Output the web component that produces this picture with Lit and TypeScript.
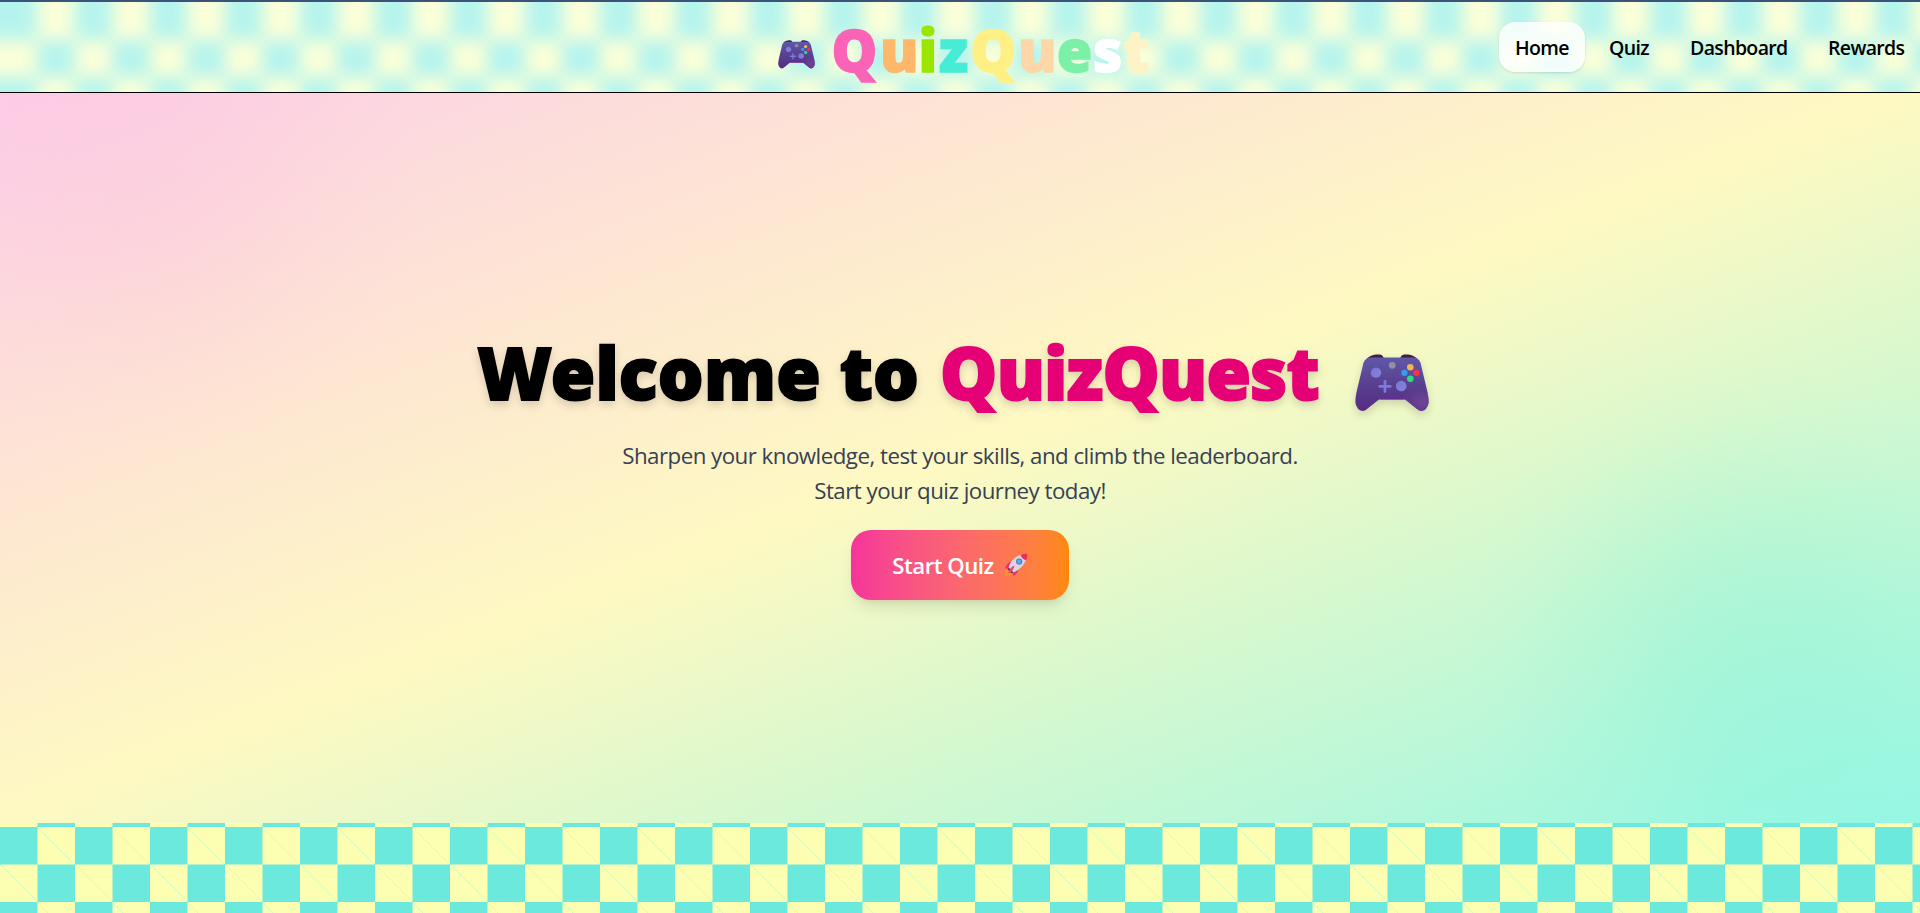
import { LitElement, html, css } from "lit";
import { customElement, property } from "lit/decorators.js";
import { classMap } from "lit/directives/class-map.js";

@customElement("game-pad")
export class GamePad extends LitElement {
  static styles = css`
    :host { display: block; }
    svg { display: block; width: 100%; height: 100%; overflow: visible; }
  `;
  render() {
    return html`<svg viewBox="0 0 74 58" preserveAspectRatio="none">
      <defs>
        <linearGradient id="shell" x1="0" y1="0" x2="0" y2="1">
          <stop offset="0" stop-color="#6058a8"></stop>
          <stop offset=".5" stop-color="#58408f"></stop>
          <stop offset="1" stop-color="#572a84"></stop>
        </linearGradient>
        <radialGradient id="grip" cx=".92" cy=".85" r=".3">
          <stop offset="0" stop-color="#704494"></stop>
          <stop offset="1" stop-color="#704494" stop-opacity="0"></stop>
        </radialGradient>
        <linearGradient id="stick" x1="0" y1="0" x2="1" y2="1">
          <stop offset="0" stop-color="#7a75d6"></stop>
          <stop offset="1" stop-color="#8582dc"></stop>
        </linearGradient>
      </defs>
      <path d="M11 6C13 2 19 0 25 .5Q28 1 29 5L27 7H11ZM63 6C61 2 55 0 49 .5Q46 1 45 5L47 7H63Z" fill="#431c48"></path>
      <path d="M16 3.5H58Q63.500 3.500 65.500 9L72.500 39Q74 47 73.500 50Q72 57 66.500 58Q64 58 62 56L51 47Q49.500 45.800 47 45.800H27Q24.500 45.800 23 47L12 56Q10 58 7.500 58Q2 57 .5 50Q0 47 1.500 39L8.500 9Q10.500 3.500 16 3.500Z" fill="url(#shell)"></path>
      <path d="M16 3.5H58Q63.500 3.500 65.500 9L72.500 39Q74 47 73.500 50Q72 57 66.500 58Q64 58 62 56L51 47Q49.500 45.800 47 45.800H27Q24.500 45.800 23 47L12 56Q10 58 7.500 58Q2 57 .5 50Q0 47 1.500 39L8.500 9Q10.500 3.500 16 3.500Z" fill="url(#grip)"></path>
      <path d="M25 45.800H49" stroke="#6d27a5" stroke-width="1.400"></path>
      <circle cx="21" cy="19" r="5.200" fill="url(#stick)"></circle>
      <circle cx="46.200" cy="32.500" r="5.400" fill="url(#stick)"></circle>
      <path d="M30 27.800V38.200M24.800 33H35.200" stroke="#7d77e2" stroke-width="2.800" stroke-linecap="round"></path>
      <circle cx="37.200" cy="11.500" r="3.400" fill="#978ea6"></circle>
      <circle cx="55.300" cy="13.400" r="3.300" fill="#f5b74d"></circle>
      <circle cx="61.300" cy="19.200" r="3.200" fill="#f7314f"></circle>
      <circle cx="49.400" cy="19.200" r="3.200" fill="#349eed"></circle>
      <circle cx="55.300" cy="25.200" r="3.300" fill="#2ddd83"></circle>
    </svg>`;
  }
}

@customElement("rocket-icon")
export class RocketIcon extends LitElement {
  static styles = css`
    :host { display: block; }
    svg { display: block; width: 100%; height: 100%; }
  `;
  render() {
    return html`<svg viewBox="0 0 24 24">
      <path d="M1.500 16.500Q5 15 7.500 18Q9.500 20.500 6.500 22Q3 23 .8 22.600Z" fill="#ff8f2a"></path>
      <path d="M8 8.500Q3 9 1 15.500L6 15.500ZM14.500 15Q14.500 20.500 9.500 23L8 18Z" fill="#e8336d"></path>
      <path d="M4.500 14.500Q7 5.500 16 2Q20 .8 22.600 1.200Q23 3.500 22 7Q18.500 15.500 9.500 19.500Z" fill="#dcd6e2"></path>
      <path d="M16.500 1.800Q20.500 .2 23.200 .8Q23.800 3.500 22.200 7.400Q17.800 6.300 16.500 1.800Z" fill="#ee2f55"></path>
      <path d="M4.500 14.500L9.500 19.500L7.500 20.300L3.500 16.300Z" fill="#5a3a72"></path>
      <path d="M10.500 12.500Q6 14 4 20Q9.500 19 10.500 12.500Z" fill="#f0407c"></path>
      <circle cx="15.200" cy="8.500" r="3.100" fill="#4b6fb8"></circle>
      <circle cx="15.200" cy="8.500" r="2.200" fill="#5ea6f2"></circle>
    </svg>`;
  }
}

interface Glyph { ch: string; color: string; width: number; }

@customElement("app-root")
export class AppRoot extends LitElement {
  @property() page = "Home";

  private links = [
    { label: "Home", width: 54 },
    { label: "Quiz", width: 41 },
    { label: "Dashboard", width: 98 },
    { label: "Rewards", width: 76 },
  ];

  private letters: Glyph[] = [
    { ch: "Q", color: "#fb64b6", width: 48.4 },
    { ch: "u", color: "#ffb86a", width: 38.5 },
    { ch: "i", color: "#9ae600", width: 20.5 },
    { ch: "z", color: "#46ecd5", width: 31.4 },
    { ch: "Q", color: "#fff085", width: 47.7 },
    { ch: "u", color: "#ffd6a7", width: 38.8 },
    { ch: "e", color: "#7bf1a8", width: 36 },
    { ch: "s", color: "#ffffff", width: 30.1 },
    { ch: "t", color: "#fef3c6", width: 26 },
  ];

  static styles = css`
    :host {
      display: flex;
      flex-direction: column;
      box-sizing: border-box;
      height: 913px;
      overflow: hidden;
      border-top: 2px solid #3b5379;
      font-family: "Open Sans", "Noto Sans", sans-serif;
      color: #000;
      background-color: #6ce9dd;
      background-image:
        linear-gradient(45deg, #fcffb2 25%, transparent 25%, transparent 75%, #fcffb2 75%, #fcffb2),
        linear-gradient(45deg, #fcffb2 25%, transparent 25%, transparent 75%, #fcffb2 75%, #fcffb2);
      background-size: 75px 75px;
      background-position: 0 0, 37.5px 37.5px;
    }
    .header {
      position: relative;
      z-index: 0;
      display: grid;
      grid-template-columns: 1fr auto 1fr;
      height: 90px;
      flex: none;
      overflow: hidden;
    }
    .haze {
      position: absolute;
      z-index: -1;
      inset: -30px;
      display: flex;
      flex-direction: column;
      filter: blur(8.5px);
    }
    .band {
      height: 37.5px;
      flex: none;
      border-left: 30px solid #b5f4ee;
      background: repeating-linear-gradient(90deg, #b5f4ee 0 37.5px, #fbffd8 37.5px 75px);
    }
    .band.odd {
      border-color: #fbffd8;
      background: repeating-linear-gradient(90deg, #fbffd8 0 37.5px, #b5f4ee 37.5px 75px);
    }
    .band.first { height: 67.5px; }
    .band.last { height: auto; flex: 1; }
    .brand { grid-column: 2; display: flex; padding-left: 7px; }
    .brand game-pad { width: 37px; height: 28.5px; margin: 38px 16.4px 0 0; }
    .word {
      display: flex;
      padding-top: 17.5px;
      font-family: "Noto Sans", sans-serif;
      font-size: 57.5px;
      font-weight: 900;
      line-height: 60px;
      -webkit-text-stroke: 1.4px currentColor;
    }
    .nav { display: flex; justify-content: flex-end; gap: 8px; padding-top: 20px; }
    .link {
      height: 50px;
      padding: 0 16px;
      border-radius: 16px;
      font-size: 19.5px;
      font-weight: 600;
      letter-spacing: -0.65px;
      line-height: 51px;
      white-space: nowrap;
    }
    .active { background: rgba(255, 255, 255, 0.8); box-shadow: 0 1px 3px rgba(0,0,0,.1), 0 1px 2px -1px rgba(0,0,0,.1); }
    .hero {
      height: 731px;
      flex: none;
      display: flex;
      flex-direction: column;
      align-items: center;
      box-sizing: border-box;
      padding-top: 234px;
      border-top: 1px solid #000;
      background:
        radial-gradient(circle at 1745px 547px, rgba(70,236,213,.16) 0, rgba(70,236,213,.135) 80px, rgba(70,236,213,.07) 160px, rgba(70,236,213,.02) 230px, rgba(70,236,213,0) 280px),
        radial-gradient(circle at 140px 90px, rgba(253,165,213,.12) 0, rgba(253,165,213,.1) 80px, rgba(253,165,213,.055) 160px, rgba(253,165,213,.015) 230px, rgba(253,165,213,0) 280px),
        linear-gradient(to bottom right, #fccee8, #fef9c2, #96f7e4);
    }
    .title {
      display: flex;
      margin: 0;
      padding-right: 14px;
      font-family: "Noto Sans", sans-serif;
      font-size: 72px;
      font-weight: 900;
      line-height: 90px;
      letter-spacing: 0.2px;
      white-space: pre;
      -webkit-text-stroke: 2px currentColor;
      filter: drop-shadow(0 4px 4px rgba(0,0,0,.15));
    }
    .lead-in { margin-right: 2px; }
    .pink { color: #e60076; letter-spacing: -0.8px; }
    .title game-pad { width: 74px; height: 57px; margin: 27px 0 0 36px; }
    .lead { margin: 21px 0 0; font-size: 22.3px; letter-spacing: -0.52px; line-height: 35px; text-align: center; color: #364153; }
    .cta {
      display: flex;
      align-items: center;
      justify-content: center;
      gap: 10px;
      width: 218px;
      height: 70px;
      margin-top: 22px;
      padding: 0;
      border: 0;
      border-radius: 20px;
      font: 600 22.2px "Open Sans", sans-serif;
      letter-spacing: -0.5px;
      color: #fff;
      background: linear-gradient(to right in oklab, #f6339a, #ff8904);
      box-shadow: 0 10px 15px -3px rgba(0,0,0,.1), 0 4px 6px -4px rgba(0,0,0,.1);
    }
    .cta rocket-icon { width: 24px; height: 24px; }
  `;

  render() {
    return html`
      <header class="header">
        <div class="haze">
          <div class="band first"></div>
          <div class="band odd"></div>
          <div class="band last"></div>
        </div>
        <div class="brand">
          <game-pad></game-pad>
          <div class="word">
            ${this.letters.map((g) => html`<span style="color:${g.color};width:${g.width}px">${g.ch}</span>`)}
          </div>
        </div>
        <nav class="nav">
          ${this.links.map((l) => html`<a class=${classMap({ link: true, active: l.label === this.page })} style="width:${l.width}px">${l.label}</a>`)}
        </nav>
      </header>
      <main class="hero">
        <h1 class="title"><span class="lead-in">Welcome to </span><span class="pink">QuizQuest</span><game-pad></game-pad></h1>
        <p class="lead">Sharpen your knowledge, test your skills, and climb the leaderboard.<br />Start your quiz journey today!</p>
        <button class="cta"><span>Start Quiz</span><rocket-icon></rocket-icon></button>
      </main>
    `;
  }
}
